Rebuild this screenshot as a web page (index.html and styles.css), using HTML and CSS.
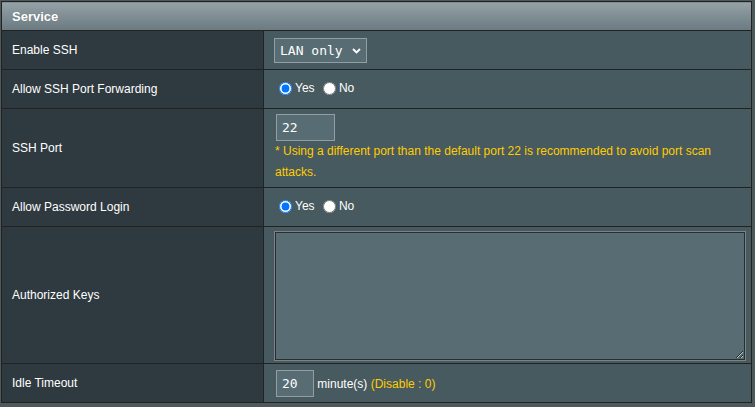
FILE: index.html
```html
<!DOCTYPE html>
<html>
<head>
<meta charset="utf-8">
<link rel="stylesheet" href="styles.css">
</head>
<body>
<table class="form-table">
  <colgroup>
    <col class="col-label">
    <col class="col-value">
  </colgroup>
  <thead>
    <tr><td colspan="2" class="head">Service</td></tr>
  </thead>
  <tbody>
    <tr class="row">
      <th>Enable SSH</th>
      <td>
        <span class="select-wrap">
          <select class="select"><option>LAN only</option><option>LAN &amp; WAN</option><option>No</option></select>
          <svg class="chev" width="9" height="6" viewBox="0 0 9 6"><path d="M1 1 L4.5 4.5 L8 1" fill="none" stroke="#fff" stroke-width="1.8"/></svg>
        </span>
      </td>
    </tr>
    <tr class="row">
      <th>Allow SSH Port Forwarding</th>
      <td>
        <label class="radio"><input type="radio" name="fwd" checked>Yes</label>
        <label class="radio"><input type="radio" name="fwd">No</label>
      </td>
    </tr>
    <tr class="row row-port">
      <th>SSH Port</th>
      <td>
        <input type="text" class="port-input" value="22">
        <div class="hint">* Using a different port than the default port 22 is recommended to avoid port scan attacks.</div>
      </td>
    </tr>
    <tr class="row">
      <th>Allow Password Login</th>
      <td>
        <label class="radio"><input type="radio" name="pw" checked>Yes</label>
        <label class="radio"><input type="radio" name="pw">No</label>
      </td>
    </tr>
    <tr class="row row-keys">
      <th>Authorized Keys</th>
      <td><textarea class="keys"></textarea></td>
    </tr>
    <tr class="row">
      <th>Idle Timeout</th>
      <td class="idle">
        <input type="text" class="idle-input" value="20">
        <span class="unit">minute(s)</span>
        <span class="note">(Disable : 0)</span>
      </td>
    </tr>
  </tbody>
</table>
</body>
</html>
```
FILE: styles.css
```css
html, body {
  margin: 0;
  background: #4d595d;
}
body {
  padding: 1px;
  font-family: "Liberation Sans", Arial, sans-serif;
  font-size: 12px;
  color: #fff;
}
.form-table {
  border-collapse: collapse;
  width: 751px;
  table-layout: fixed;
}
.col-label { width: 262px; }
.form-table td,
.form-table th {
  border: 1px solid #222;
  padding: 0 10px;
}
.head {
  height: 28px;
  padding: 0 10px;
  background: linear-gradient(to bottom, #95a2a7 0%, #6a7a80 100%);
  font-size: 13px;
  font-weight: bold;
  text-align: left;
  text-shadow: 0 0 1px rgba(0,0,0,0.25);
}
.row th {
  height: 38px;
  background: #2f3a40;
  font-weight: normal;
  text-align: left;
  vertical-align: middle;
}
.row td {
  background: #475a5f;
  vertical-align: middle;
}
.row-port th { height: 78px; }
.row-keys th { height: 136px; }

.select-wrap {
  position: relative;
  display: inline-block;
  vertical-align: middle;
}
.select {
  appearance: none;
  -webkit-appearance: none;
  display: block;
  width: 93px;
  height: 25px;
  box-sizing: border-box;
  background: #576d73;
  border: 1px solid #929ea1;
  border-radius: 0;
  color: #fff;
  font-family: "DejaVu Sans Mono", "Liberation Mono", monospace;
  font-size: 13px;
  padding: 0 0 0 5px;
  margin: 0;
  outline: none;
}
.chev {
  position: absolute;
  right: 6px;
  top: 10px;
  pointer-events: none;
}

.radio {
  display: inline-flex;
  align-items: center;
  margin-right: 0;
}
.radio input {
  margin: 2px 3px 0 5px;
  width: 13px;
  height: 13px;
}

.port-input,
.idle-input {
  box-sizing: border-box;
  background: #576d73;
  border: 1px solid #929ea1;
  color: #fff;
  font-family: "DejaVu Sans Mono", "Liberation Mono", monospace;
  font-size: 13px;
  padding: 0 0 0 5px;
  margin: 0 0 0 2px;
  outline: none;
  border-radius: 0;
}
.port-input {
  display: block;
  width: 59px;
  height: 27px;
  margin-top: 1px;
}
.hint {
  color: #ffcc00;
  line-height: 21px;
  margin-left: 1px;
}

.keys {
  display: block;
  box-sizing: border-box;
  width: 470px;
  height: 128px;
  margin: 2px 0 0 1px;
  background: #576d73;
  border: 1px solid #2a2d2f;
  box-shadow: 0 0 0 1px #7a8487;
  color: #fff;
  resize: both;
  outline: none;
  font-family: "DejaVu Sans Mono", monospace;
  font-size: 12px;
}

.idle {
  white-space: nowrap;
}
.idle-input {
  width: 38px;
  height: 27px;
  vertical-align: middle;
}
.unit {
  vertical-align: middle;
}
.note {
  color: #ffcc00;
  vertical-align: middle;
}
```
